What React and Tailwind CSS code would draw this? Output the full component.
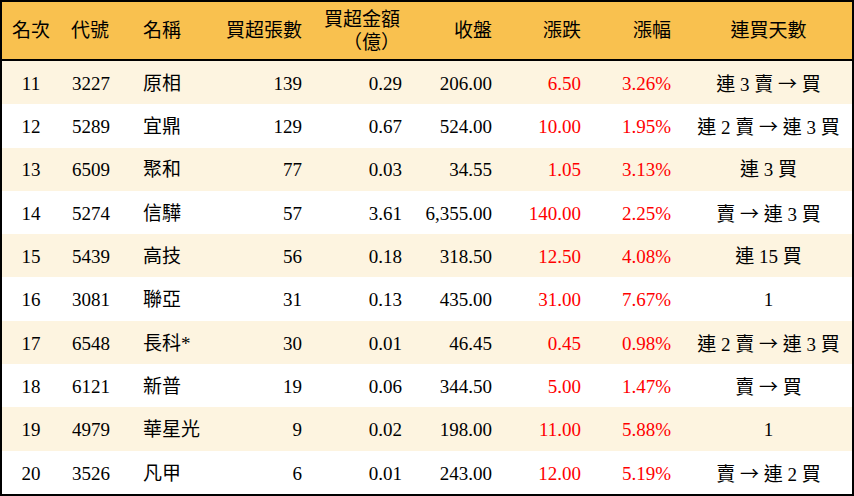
const rows = [
  ["11", "3227", "原相", "139", "0.29", "206.00", "6.50", "3.26%", "連 3 賣 → 買"],
  ["12", "5289", "宜鼎", "129", "0.67", "524.00", "10.00", "1.95%", "連 2 賣 → 連 3 買"],
  ["13", "6509", "聚和", "77", "0.03", "34.55", "1.05", "3.13%", "連 3 買"],
  ["14", "5274", "信驊", "57", "3.61", "6,355.00", "140.00", "2.25%", "賣 → 連 3 買"],
  ["15", "5439", "高技", "56", "0.18", "318.50", "12.50", "4.08%", "連 15 買"],
  ["16", "3081", "聯亞", "31", "0.13", "435.00", "31.00", "7.67%", "1"],
  ["17", "6548", "長科*", "30", "0.01", "46.45", "0.45", "0.98%", "連 2 賣 → 連 3 買"],
  ["18", "6121", "新普", "19", "0.06", "344.50", "5.00", "1.47%", "賣 → 買"],
  ["19", "4979", "華星光", "9", "0.02", "198.00", "11.00", "5.88%", "1"],
  ["20", "3526", "凡甲", "6", "0.01", "243.00", "12.00", "5.19%", "賣 → 連 2 買"],
];

const cols =
  "grid grid-cols-[58px_70px_70px_115px_100px_90px_90px_90px_1fr] items-center";

// draw the arrow with the CJK font so it is full width like the reference
const Streak = ({ text }) => {
  const parts = text.split("→");
  return (
    <>
      {parts.map((p, i) => (
        <span key={i}>
          {p}
          {i < parts.length - 1 && (
            <span className="font-['Noto_Sans_CJK_TC',sans-serif]">→</span>
          )}
        </span>
      ))}
    </>
  );
};

export default function App() {
  return (
    <div className="w-[854px] h-[496px] border-2 border-black flex flex-col bg-white text-black text-[19px] font-['Liberation_Serif','Noto_Sans_CJK_TC',serif]">
      {/* Header */}
      <div className={`${cols} h-[59px] shrink-0 bg-[#F9C14F] border-b-2 border-black leading-[23px]`}>
        <div className="text-center">名次</div>
        <div className="pl-[11px]">代號</div>
        <div className="pl-[13px]">名稱</div>
        <div className="text-right pr-[13px]">買超張數</div>
        <div className="text-right pr-[15px]">
          買超金額
          <br />
          （億）
        </div>
        <div className="text-right pr-[13px]">收盤</div>
        <div className="text-right pr-[14px]">漲跌</div>
        <div className="text-right pr-[14px]">漲幅</div>
        <div className="text-center">連買天數</div>
      </div>

      {/* Rows */}
      {rows.map((r, i) => (
        <div
          key={r[0]}
          className={`${cols} flex-1 pt-[3px] ${i % 2 === 0 ? "bg-[#FDF4E0]" : "bg-white"}`}
        >
          <div className="text-center">{r[0]}</div>
          <div className="pl-[12px]">{r[1]}</div>
          <div className="pl-[13px]">{r[2]}</div>
          <div className="text-right pr-[13px]">{r[3]}</div>
          <div className="text-right pr-[13px]">{r[4]}</div>
          <div className="text-right pr-[13px]">{r[5]}</div>
          <div className="text-right pr-[14px] text-[#FF0000]">{r[6]}</div>
          <div className="text-right pr-[14px] text-[#FF0000]">{r[7]}</div>
          <div className="text-center whitespace-pre">
            <Streak text={r[8]} />
          </div>
        </div>
      ))}
    </div>
  );
}
